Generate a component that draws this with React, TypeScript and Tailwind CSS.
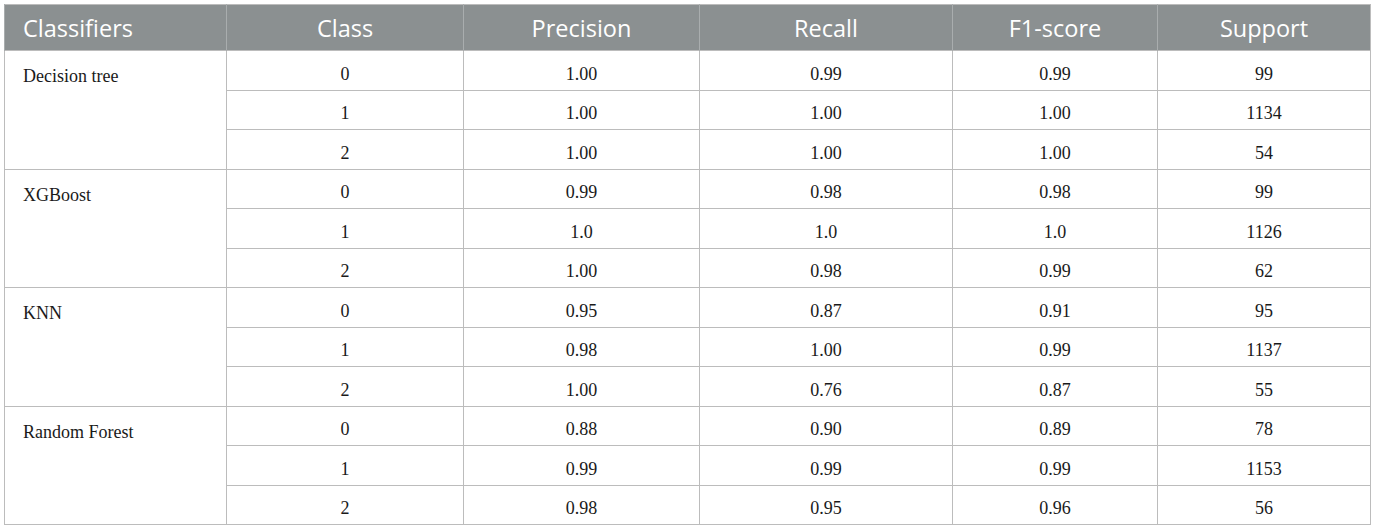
import React from "react";

type Row = [string, string, string, string, string];
const groups: { name: string; rows: Row[] }[] = [
  {
    name: "Decision tree",
    rows: [
      ["0", "1.00", "0.99", "0.99", "99"],
      ["1", "1.00", "1.00", "1.00", "1134"],
      ["2", "1.00", "1.00", "1.00", "54"],
    ],
  },
  {
    name: "XGBoost",
    rows: [
      ["0", "0.99", "0.98", "0.98", "99"],
      ["1", "1.0", "1.0", "1.0", "1126"],
      ["2", "1.00", "0.98", "0.99", "62"],
    ],
  },
  {
    name: "KNN",
    rows: [
      ["0", "0.95", "0.87", "0.91", "95"],
      ["1", "0.98", "1.00", "0.99", "1137"],
      ["2", "1.00", "0.76", "0.87", "55"],
    ],
  },
  {
    name: "Random Forest",
    rows: [
      ["0", "0.88", "0.90", "0.89", "78"],
      ["1", "0.99", "0.99", "0.99", "1153"],
      ["2", "0.98", "0.95", "0.96", "56"],
    ],
  },
];

const headers = ["Classifiers", "Class", "Precision", "Recall", "F1-score", "Support"];

export default function App() {
  return (
    <div className="w-[1375px] h-[532px] bg-white pt-[4px] pl-[4px]">
      <table className="table-fixed border-collapse w-[1366px] border border-[#bcbcbc] text-[18px] text-[#1a1a1a]">
        <colgroup>
          <col className="w-[222px]" />
          <col className="w-[237px]" />
          <col className="w-[236px]" />
          <col className="w-[253px]" />
          <col className="w-[205px]" />
          <col className="w-[213px]" />
        </colgroup>
        <thead>
          <tr className="h-[46px] bg-[#8b9091]">
            {headers.map((h, i) => (
              <th
                key={h}
                className={
                  i === 0
                    ? "font-['Open_Sans',sans-serif] font-normal text-[23.5px] text-white align-middle pt-[3px] border-l border-[#a9adae] text-left pl-[18px]"
                    : "font-['Open_Sans',sans-serif] font-normal text-[23.5px] text-white align-middle pt-[3px] border-l border-[#a9adae] text-center"
                }
              >
                {h}
              </th>
            ))}
          </tr>
        </thead>
        <tbody>
          {groups.map((g) =>
            g.rows.map((r, ri) => (
              <tr key={g.name + ri} className="h-[39.5px]">
                {ri === 0 && (
                  <td
                    rowSpan={3}
                    className="font-['Liberation_Serif',serif] text-[18px] text-[#1a1a1a] align-top text-left pl-[18px] pt-[12px] border border-[#bcbcbc]"
                  >
                    {g.name}
                  </td>
                )}
                {r.map((c, ci) => (
                  <td
                    key={ci}
                    className="font-['Liberation_Serif',serif] text-[18px] text-[#1a1a1a] text-center align-middle pt-[8px] border border-[#bcbcbc]"
                  >
                    {c}
                  </td>
                ))}
              </tr>
            ))
          )}
        </tbody>
      </table>
    </div>
  );
}
